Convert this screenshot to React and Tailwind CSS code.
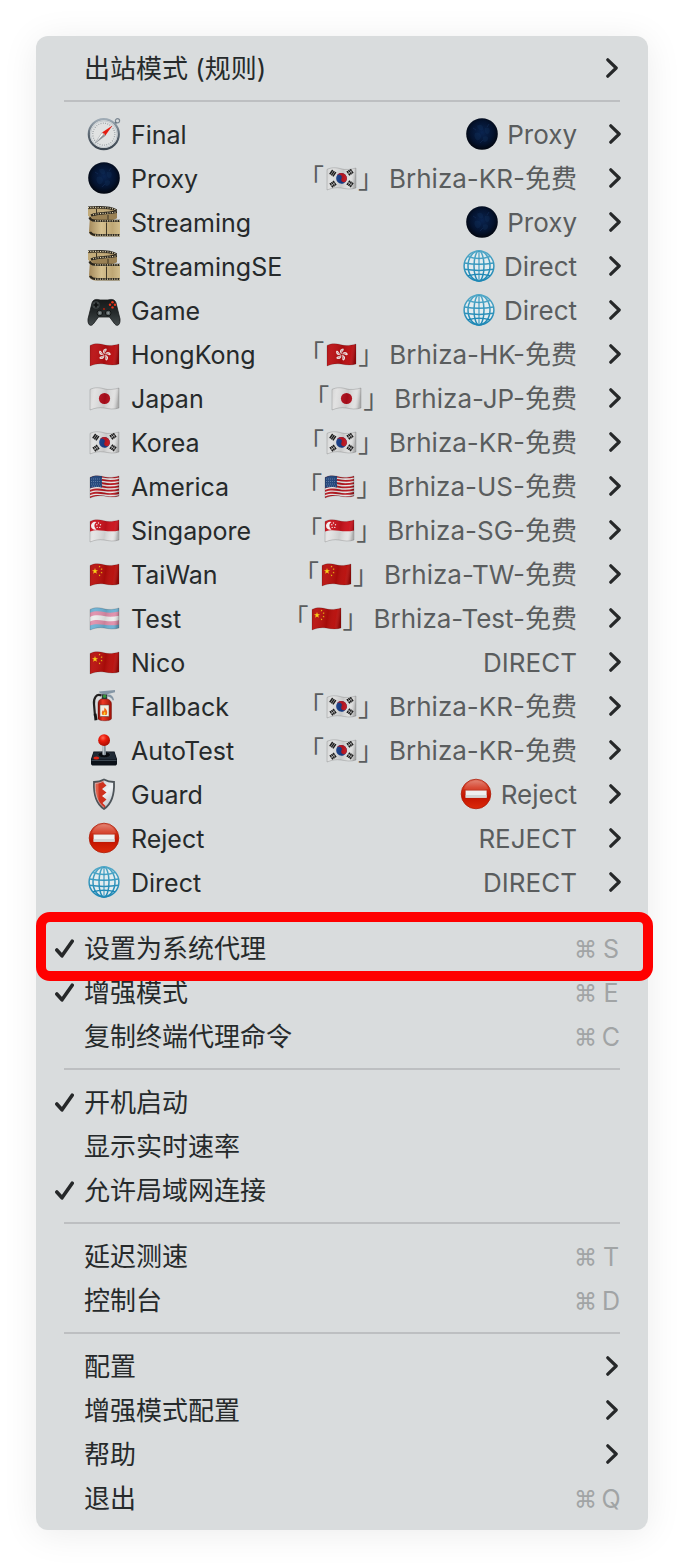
import React from 'react';

const WAVE = 'M2 7.4 C7 5 12 5.6 16 6.8 S26 7.6 31 6 V26 C26 27.8 21 26.8 16 26 S7 26 2 28 Z';

function Defs() {
  return (
    <svg aria-hidden="true" className="absolute h-0 w-0">
      <defs>
        <clipPath id="flag-clip"><path d={WAVE} /></clipPath>
        <clipPath id="shield-clip"><path d="M16 1.5 C12.500 3.500 9 4 6 4 C5.500 15 7 25 16 31 C25 25 26.500 15 26 4 C23 4 19.500 3.500 16 1.500Z" /></clipPath>
        <linearGradient id="flag-shade" x1="0" x2="1" y1="0" y2="0.15">
          <stop offset="0" stopColor="#000" stopOpacity="0.14" />
          <stop offset="0.25" stopColor="#fff" stopOpacity="0.06" />
          <stop offset="0.6" stopColor="#000" stopOpacity="0.1" />
          <stop offset="0.85" stopColor="#fff" stopOpacity="0.03" />
          <stop offset="1" stopColor="#000" stopOpacity="0.22" />
        </linearGradient>
        <radialGradient id="moon" cx="0.5" cy="0.45" r="0.55">
          <stop offset="0" stopColor="#0a2450" />
          <stop offset="0.65" stopColor="#04132f" />
          <stop offset="1" stopColor="#02060f" />
        </radialGradient>
        <linearGradient id="globe" x1="0" x2="0" y1="0" y2="1">
          <stop offset="0" stopColor="#4fa6c6" />
          <stop offset="1" stopColor="#1c86b4" />
        </linearGradient>
        <linearGradient id="stop" x1="0" x2="0" y1="0" y2="1">
          <stop offset="0" stopColor="#e07a68" />
          <stop offset="0.3" stopColor="#d23018" />
          <stop offset="0.6" stopColor="#c41400" />
          <stop offset="1" stopColor="#dc2a0a" />
        </linearGradient>
        <linearGradient id="film" x1="0" x2="1" y1="0" y2="0">
          <stop offset="0" stopColor="#a58a5c" />
          <stop offset="0.4" stopColor="#d6c190" />
          <stop offset="0.75" stopColor="#bfa774" />
          <stop offset="1" stopColor="#d2be8d" />
        </linearGradient>
        <linearGradient id="steel" x1="0" x2="0" y1="0" y2="1">
          <stop offset="0" stopColor="#9fabb5" />
          <stop offset="0.5" stopColor="#5c6873" />
          <stop offset="1" stopColor="#3c4650" />
        </linearGradient>
        <linearGradient id="pad" x1="0" x2="0" y1="0" y2="1">
          <stop offset="0" stopColor="#161919" />
          <stop offset="0.5" stopColor="#252a2b" />
          <stop offset="1" stopColor="#444b4c" />
        </linearGradient>
        <linearGradient id="red-tank" x1="0" x2="1" y1="0" y2="0">
          <stop offset="0" stopColor="#8c0c04" />
          <stop offset="0.35" stopColor="#ef3a26" />
          <stop offset="1" stopColor="#9c1006" />
        </linearGradient>
        <radialGradient id="ball" cx="0.4" cy="0.3" r="0.7">
          <stop offset="0" stopColor="#ff6a55" />
          <stop offset="0.4" stopColor="#ec1c0c" />
          <stop offset="1" stopColor="#a80c02" />
        </radialGradient>
        <linearGradient id="silver" x1="0" x2="1" y1="0" y2="1">
          <stop offset="0" stopColor="#aab4bd" />
          <stop offset="0.5" stopColor="#eef1f3" />
          <stop offset="1" stopColor="#97a3ad" />
        </linearGradient>
      </defs>
    </svg>
  );
}

function Stripe({ y, h, color }) {
  return (
    <path
      fill={color}
      d={`M2 ${y + 1.2} C7 ${y - 1} 12 ${y - 0.6} 16 ${y + 0.4} S26 ${y + 1.2} 31 ${y} V${y + h} C26 ${y + h + 1.4} 21 ${y + h + 1} 16 ${y + h + 0.4} S7 ${y + h - 0.8} 2 ${y + h + 1.2}Z`}
    />
  );
}

function star(cx, cy, r, turn = 0) {
  const points = [];
  for (let i = 0; i < 10; i += 1) {
    const a = ((i * 36 - 90 + turn) * Math.PI) / 180;
    const d = i % 2 ? r * 0.4 : r;
    points.push(`${(cx + d * Math.cos(a)).toFixed(2)},${(cy + d * Math.sin(a)).toFixed(2)}`);
  }
  return points.join(' ');
}

function Flag({ children, base }) {
  return (
    <>
      <g clipPath="url(#flag-clip)">
        <rect width="32" height="32" fill={base} />
        {children}
        <rect width="32" height="32" fill="url(#flag-shade)" />
      </g>
      <path d={WAVE} fill="none" stroke="#000" strokeOpacity="0.22" strokeWidth="0.7" />
    </>
  );
}

const trigram = (x, y, angle, broken) => (
  <g key={`${x}-${y}`} transform={`translate(${x} ${y}) rotate(${angle})`} stroke="#111" strokeWidth="1.5">
    <path d="M-2.600 -1.900H2.600M-2.600 0H2.600M-2.600 1.900H2.600" />
    {broken && <path d="M0 -2.600V2.600" stroke="#d9dadb" strokeWidth="0.6" />}
  </g>
);

const ART = {
  compass: (
    <>
      <circle cx="29.500" cy="2.800" r="2.100" fill="none" stroke="#7b8792" strokeWidth="1.200" />
      <path d="M26 6.500 28.200 4.300" stroke="#65717c" strokeWidth="2.200" />
      <circle cx="15.800" cy="16.200" r="15" fill="#dfe2e3" stroke="url(#steel)" strokeWidth="2.200" />
      <circle cx="15.800" cy="16.200" r="13.300" fill="none" stroke="#c3c9cd" strokeWidth="1" />
      <circle cx="15.800" cy="16.200" r="11" fill="#e0e2e2" stroke="#8b9297" strokeWidth="1.300" strokeDasharray="0.7 1.6" />
      <path d="M24.500 7.500 14 14.600 17.200 17.800Z" fill="#e51c10" />
      <path d="M7 25.200 14 14.600 17.200 17.800Z" fill="#fbfbfb" stroke="#8a9196" strokeWidth="0.500" />
      <path d="M7 25.200 17.200 17.800 15.600 16.200Z" fill="#878e93" />
      <circle cx="15.700" cy="16.200" r="1" fill="#c9a89f" />
    </>
  ),
  moon: (
    <>
      <circle cx="16" cy="16" r="15.800" fill="url(#moon)" />
      <path d="M11 8C14 5 18 8 17 11S12 12 11 8ZM19 10C23 8 25 12 23 15S18 14 19 10ZM9 15C13 13 17 17 14 21S7 19 9 15ZM17 19C21 17 24 20 21 23S16 22 17 19Z" fill="#153461" opacity="0.3" />
      <path d="M7 10 10 12M14 25 17 22M23 6 21 9" stroke="#24447a" strokeWidth="0.600" opacity="0.5" />
    </>
  ),
  film: (
    <>
      <path d="M0 1 C9 0 27 1 29 5 V12 C26 15 16 15 6 15 L2 13 C0 10 2 7 0 7Z" fill="#a89063" />
      <path d="M0 3.500 C10 2.500 23 3.500 25 6 C20 6.500 9 7 2.500 10.500 L0 10Z" fill="#c2ab7a" />
      <path d="M4 11 C9 8.500 20 9 29 7 V12 C26 14 16 14.500 6 14.500Z" fill="#9a8154" />
      <path d="M2 10 C1 14 4 15.500 9 15.500 H32 V30.500 H8 C3 30.500 1 28 1 25Z" fill="url(#film)" />
      <path d="M0 1.600 C10 1 24 1.500 28.500 4.500M3 9.500 C10 6.500 20 7.500 28.800 5.800M1.500 11.500 C3 15 6 14.900 10 14.900H32M2 26 C4 29.400 7 29.100 10 29.100H32" fill="none" stroke="#29241b" strokeWidth="2.400" />
      <path d="M0 1.600 C10 1 24 1.500 28 4M5 8.800 C11 7 20 7.600 28 6M7 14.900H32M7 29.100H32" fill="none" stroke="#e8dbb5" strokeWidth="1.100" strokeDasharray="1.1 1.3" />
      <path d="M18.500 16.500V28M8.500 3V7M20 9V13.500" stroke="#30291d" strokeWidth="0.900" />
    </>
  ),
  game: (
    <>
      <path d="M4 9 C5 5 9 5 12 6 H20 C23 5 27 5 28 9 L32 25 C32.500 32 28.500 33 26 29 L21.500 23 H10.500 L6 29 C3.500 33 -0.500 32 0 25Z" fill="url(#pad)" stroke="#16191a" strokeWidth="0.800" />
      <circle cx="8" cy="11" r="3.700" fill="#3e4445" />
      <path d="M8 8.500V13.500M5.500 11H10.500" stroke="#0e1011" strokeWidth="1.700" />
      <g fill="#e9361c"><circle cx="24.500" cy="8.200" r="1.300" /><circle cx="22" cy="10.800" r="1.200" /><circle cx="27" cy="10.800" r="1.200" /><circle cx="24.500" cy="13.400" r="1.200" /></g>
      <g fill="#5b6364" stroke="#121515" strokeWidth="1"><circle cx="11.800" cy="19" r="2.800" /><circle cx="20.200" cy="19" r="2.800" /></g>
      <g fill="#8d9697"><circle cx="11.800" cy="19" r="1" /><circle cx="20.200" cy="19" r="1" /></g>
      <circle cx="16" cy="15" r="0.900" fill="#c0220e" />
    </>
  ),
  hk: (
    <Flag base="#b90d10">
      <g transform="translate(16.500 16.500)" fill="#f6eeee">
        {[10, 82, 154, 226, 298].map((a) => (
          <g key={a} transform={`rotate(${a})`}>
            <path d="M0 -0.500C-3 -2 -2.600 -5.500 0.600 -6.300C2.600 -5 0 -3.800 0 -0.500Z" />
            <path d="M0 -1.500C-0.800 -2.800 -0.600 -4 0.200 -4.800" fill="none" stroke="#c8282a" strokeWidth="0.400" />
          </g>
        ))}
      </g>
    </Flag>
  ),
  jp: (
    <Flag base="#e0e0e0"><circle cx="16.500" cy="16.500" r="5.600" fill="#b30d1b" /></Flag>
  ),
  kr: (
    <Flag base="#dedfdf">
      <g transform="translate(16.500 16.400) rotate(24)">
        <circle r="5.400" fill="#173f8c" />
        <path d="M-5.400 0A5.400 5.400 0 0 1 5.400 0A2.700 2.700 0 0 1 0 0A2.700 2.700 0 0 0 -5.400 0Z" fill="#c41722" />
      </g>
      {trigram(7.8, 11.2, -56, false)}
      {trigram(25, 10.2, 56, true)}
      {trigram(8, 22.2, 56, true)}
      {trigram(25, 21.8, -56, true)}
    </Flag>
  ),
  us: (
    <Flag base="#e6e6e6">
      {[5.6, 8.9, 12.2, 15.5, 18.8, 22.1, 25.4].map((y) => <Stripe key={y} y={y} h={1.8} color="#b5151d" />)}
      <path d="M2 6 C6 4.500 10 5 14 6 V17.400 C10 16.600 6 16.800 2 18Z" fill="#1c4078" />
      <path d="M3 9H13.500M3 11.500H13.500M3 14H13.500M4 16.200H13.500" stroke="#86a0c2" strokeWidth="0.700" strokeDasharray="0.8 1.2" />
    </Flag>
  ),
  sg: (
    <Flag base="#e4e4e4">
      <Stripe y={4} h={12.4} color="#cb121c" />
      <path d="M8.500 8A4 4 0 1 0 8.500 15.400A4.300 4.300 0 0 1 8.500 8Z" fill="#f7f1f1" />
      <g fill="#f7e9e9"><circle cx="10.500" cy="9" r="0.700" /><circle cx="12.500" cy="10.800" r="0.700" /><circle cx="11.800" cy="13.400" r="0.700" /><circle cx="9.200" cy="13.400" r="0.700" /><circle cx="8.800" cy="10.800" r="0.700" /></g>
    </Flag>
  ),
  cn: (
    <Flag base="#b80d0a">
      <polygon points={star(7, 13.2, 3.2)} fill="#f9d20a" />
      <polygon points={star(11.6, 8.6, 1.1, 20)} fill="#f9d20a" />
      <polygon points={star(13.6, 11.2, 1.1, 40)} fill="#f9d20a" />
      <polygon points={star(13.6, 14.6, 1.1)} fill="#f9d20a" />
      <polygon points={star(11.6, 17.4, 1.1, 20)} fill="#f9d20a" />
    </Flag>
  ),
  trans: (
    <Flag base="#6bb1d4">
      <Stripe y={9.6} h={12.8} color="#e08fab" />
      <Stripe y={13.7} h={4.6} color="#ededed" />
    </Flag>
  ),
  extinguisher: (
    <>
      <path d="M13.500 5.500C8.500 3 5.500 8 6 14L7 26" fill="none" stroke="#22201f" strokeWidth="2.200" />
      <path d="M5.800 24 8.500 23.500 9.500 30 6.500 30.500Z" fill="#151515" />
      <path d="M10 14C10 10 12.500 8.500 16 8.500S23.500 10 23.500 14V28.500C23.500 31.500 10 31.500 10 28.500Z" fill="url(#red-tank)" stroke="#640a05" strokeWidth="0.400" />
      <rect x="12" y="15" width="9" height="11.500" fill="#f3eee2" stroke="#444" strokeWidth="0.500" />
      <path d="M16.500 17.500C19 20 20 22 18.500 25H14.500C13 22.500 14.500 21 15 20L16 21.500Z" fill="#ee6b16" />
      <path d="M16.600 21.500C18 23 17.500 24.500 16.700 25H15.800C15 23.800 16 23 16.600 21.500Z" fill="#fbd327" />
      <rect x="13.800" y="4.200" width="5.400" height="5" fill="#303638" />
      <circle cx="16.600" cy="6.200" r="1.700" fill="#359638" />
      <path d="M11 1.500 27 0 27 2.200 18 4.500 12 3.500ZM19 4.500C23 4 25.500 6 26 10L24.800 10.500C23.500 7.500 21.500 6.500 19 6.500Z" fill="#8496a5" />
    </>
  ),
  joystick: (
    <>
      <path d="M5.500 17.500H26.500L29 25V29.500C29 31 28 31.500 27 31.500H5C4 31.500 3 31 3 29.500V25Z" fill="#0b1118" />
      <path d="M5.800 18.200H26.200L28.400 25.600H3.600Z" fill="#202a35" />
      <path d="M3.500 26.500H28.500" stroke="#505d69" strokeWidth="0.700" />
      <ellipse cx="16.200" cy="20.800" rx="6.300" ry="3" fill="#080b0f" stroke="#38444f" strokeWidth="0.600" />
      <path d="M14.600 10H17.600L18 20.500C17.500 21.500 14.900 21.500 14.300 20.500Z" fill="#8b969e" />
      <path d="M15.300 10V20.500" stroke="#dce2e6" strokeWidth="0.800" />
      <circle cx="16.100" cy="6.200" r="5.900" fill="url(#ball)" />
      <ellipse cx="8.300" cy="24" rx="2.900" ry="1.600" fill="#e02413" />
    </>
  ),
  shield: (
    <>
      <g clipPath="url(#shield-clip)">
        <rect width="32" height="32" fill="url(#silver)" />
        <path d="M4 0H15.500V4.500L18.500 7.500L14 11L18.500 14.500L14 18L18.500 21.500L14.500 25L17.500 28L16 32H4Z" fill="#cf321f" />
        <path d="M7 5H10.500V24L7 18Z" fill="#f08b76" opacity="0.500" />
      </g>
      <path d="M16 1.500 C12.500 3.500 9 4 6 4 C5.500 15 7 25 16 31 C25 25 26.500 15 26 4 C23 4 19.500 3.500 16 1.500Z" fill="none" stroke="#4d5459" strokeWidth="1.800" />
      <path d="M16 3 C12.500 4.800 9.500 5.300 7.200 5.300 C7 15 8.500 24 16 29.400" fill="none" stroke="#cad0d4" strokeWidth="0.700" />
    </>
  ),
  reject: (
    <>
      <circle cx="16" cy="16" r="14.800" fill="url(#stop)" stroke="#ad1c08" strokeWidth="0.800" />
      <path d="M4 11C7 0 25 0 28 11C22 13 10 13 4 11Z" fill="#fff" opacity="0.120" />
      <rect x="5.300" y="12.200" width="21.600" height="7.800" rx="0.600" fill="#eff0f0" stroke="#a7210e" strokeWidth="0.500" />
      <path d="M5.700 17H26.500V19.600H5.700Z" fill="#d3d6d6" />
    </>
  ),
  globe: (
    <>
      <circle cx="16" cy="16" r="15" fill="#e3ecef" />
      <g fill="none" stroke="url(#globe)" strokeWidth="1.500">
        <circle cx="16" cy="16" r="14.900" />
        <ellipse cx="16" cy="16" rx="11" ry="14.900" />
        <ellipse cx="16" cy="16" rx="5" ry="14.900" />
        <path d="M5 6.500Q16 10.500 27 6.500M1.500 13Q16 15.500 30.500 13M1.500 19.300Q16 21.500 30.500 19.300M5 25.800Q16 22.800 27 25.800" />
      </g>
      <path d="M16 1V31" stroke="#3095bd" strokeWidth="1.100" />
    </>
  ),
};

function Emoji({ name }) {
  return (
    <svg viewBox="0 0 32 32" aria-hidden="true" className="h-8 w-8 shrink-0 overflow-visible">
      {ART[name]}
    </svg>
  );
}

function Chevron() {
  return (
    <svg viewBox="0 0 12 20" aria-hidden="true" className="h-5 w-3 shrink-0">
      <path d="M1.800 1.800 10.200 10 1.800 18.200" fill="none" stroke="#262829" strokeWidth="3.200" strokeLinecap="round" strokeLinejoin="round" />
    </svg>
  );
}

function Check() {
  return (
    <svg viewBox="0 0 19 19" aria-hidden="true" className="h-[19px] w-[19px] shrink-0">
      <path d="M1.800 11 7 16.800 17.200 2.200" fill="none" stroke="#262829" strokeWidth="3.600" strokeLinecap="round" strokeLinejoin="round" />
    </svg>
  );
}

function Separator() {
  return (
    <div role="separator" className="flex h-[22px] items-center px-7">
      <div className="h-0.5 w-full bg-[#bdbfc1]" />
    </div>
  );
}

const PROXIES = [
  { icon: 'compass', name: 'Final', valueIcon: 'moon', value: 'Proxy' },
  { icon: 'moon', name: 'Proxy', flag: 'kr', value: 'Brhiza-KR-免费' },
  { icon: 'film', name: 'Streaming', valueIcon: 'moon', value: 'Proxy' },
  { icon: 'film', name: 'StreamingSE', valueIcon: 'globe', value: 'Direct' },
  { icon: 'game', name: 'Game', valueIcon: 'globe', value: 'Direct' },
  { icon: 'hk', name: 'HongKong', flag: 'hk', value: 'Brhiza-HK-免费' },
  { icon: 'jp', name: 'Japan', flag: 'jp', value: 'Brhiza-JP-免费' },
  { icon: 'kr', name: 'Korea', flag: 'kr', value: 'Brhiza-KR-免费' },
  { icon: 'us', name: 'America', flag: 'us', value: 'Brhiza-US-免费' },
  { icon: 'sg', name: 'Singapore', flag: 'sg', value: 'Brhiza-SG-免费' },
  { icon: 'cn', name: 'TaiWan', flag: 'cn', value: 'Brhiza-TW-免费' },
  { icon: 'trans', name: 'Test', flag: 'cn', value: 'Brhiza-Test-免费' },
  { icon: 'cn', name: 'Nico', value: 'DIRECT' },
  { icon: 'extinguisher', name: 'Fallback', flag: 'kr', value: 'Brhiza-KR-免费' },
  { icon: 'joystick', name: 'AutoTest', flag: 'kr', value: 'Brhiza-KR-免费' },
  { icon: 'shield', name: 'Guard', valueIcon: 'reject', value: 'Reject' },
  { icon: 'reject', name: 'Reject', value: 'REJECT' },
  { icon: 'globe', name: 'Direct', value: 'DIRECT' },
];

function ProxyItem({ icon, name, valueIcon, flag, value }) {
  return (
    <button type="button" role="menuitem" className="flex h-11 w-full items-center pr-[27px] pl-[52px] text-left text-[25px]">
      <Emoji name={icon} />
      <span className="ml-[11px] flex-1 pt-0.5">{name}</span>
      <span className="flex items-center whitespace-nowrap text-[26px] text-[#5a5d5e]">
        {valueIcon && <Emoji name={valueIcon} />}
        {flag && (
          <span className="mr-[5px] flex items-center gap-px">
            <span className="pt-0.5">「</span>
            <Emoji name={flag} />
            <span className="pt-0.5">」</span>
          </span>
        )}
        <span className={valueIcon ? 'ml-[9px] pt-0.5' : 'pt-0.5'}>{value}</span>
      </span>
      <span className="ml-8 flex"><Chevron /></span>
    </button>
  );
}

function Item({ label, checked, shortcut, submenu, highlighted }) {
  return (
    <button
      type="button"
      role={checked === undefined ? 'menuitem' : 'menuitemcheckbox'}
      aria-checked={checked}
      className="relative flex h-11 w-full items-center pr-[27px] pl-[19px] text-left text-[26px]"
    >
      <span className="flex w-[29px] shrink-0">{checked && <Check />}</span>
      <span className="flex-1 pt-0.5">{label}</span>
      {shortcut && (
        <span className="flex items-center pt-0.5 text-[25px] text-[#a1a4a5]">
          <span className="text-[23px]">⌘</span>
          <span className="ml-1 w-5 text-center">{shortcut}</span>
        </span>
      )}
      {submenu && <span className="mr-[3px] flex"><Chevron /></span>}
      {highlighted && (
        <span className="pointer-events-none absolute -top-[14px] -right-[5px] -bottom-[11px] left-0 z-10 rounded-[14px] border-[10px] border-[#ff0000]" />
      )}
    </button>
  );
}

export default function App() {
  return (
    <main className="min-h-screen bg-white p-9 font-['Inter','Noto_Sans_CJK_SC',sans-serif] leading-8 text-[#262a2b]">
      <Defs />
      <div role="menu" className="rounded-xl bg-[#d9dcdd] py-[10px] shadow-[0_4px_36px_rgba(0,0,0,0.08)]">
        <Item label="出站模式 (规则)" submenu />
        <Separator />
        {PROXIES.map((proxy) => <ProxyItem key={proxy.name} {...proxy} />)}
        <Separator />
        <Item label="设置为系统代理" shortcut="S" checked highlighted />
        <Item label="增强模式" shortcut="E" checked />
        <Item label="复制终端代理命令" shortcut="C" />
        <Separator />
        <Item label="开机启动" checked />
        <Item label="显示实时速率" checked={false} />
        <Item label="允许局域网连接" checked />
        <Separator />
        <Item label="延迟测速" shortcut="T" />
        <Item label="控制台" shortcut="D" />
        <Separator />
        <Item label="配置" submenu />
        <Item label="增强模式配置" submenu />
        <Item label="帮助" submenu />
        <Item label="退出" shortcut="Q" />
      </div>
    </main>
  );
}
